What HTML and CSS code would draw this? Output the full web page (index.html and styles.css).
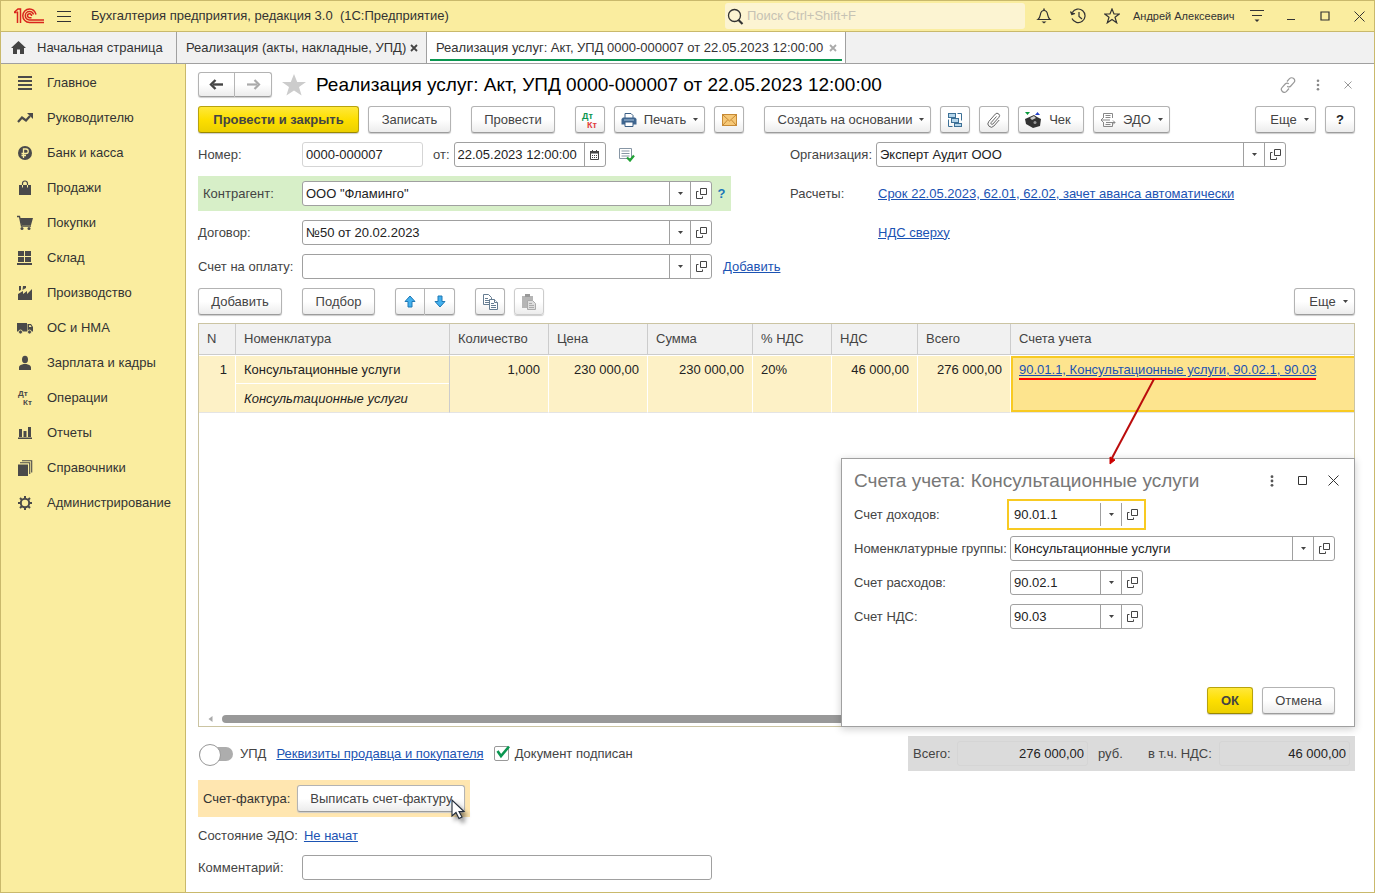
FILE: index.html
```html
<!DOCTYPE html>
<html lang="ru">
<head>
<meta charset="utf-8">
<title>Бухгалтерия предприятия</title>
<link rel="stylesheet" href="styles.css">
</head>
<body>
<svg class="sprite" aria-hidden="true">
  <symbol id="i-open" viewBox="0 0 11 11"><path d="M4.500.5h6v6h-6zM2.500 3.500H.5v7h6v-2" fill="none" stroke="#444"/></symbol>
  <symbol id="i-down" viewBox="0 0 5 3"><path d="M0 0h5L2.500 3z" fill="#444"/></symbol>
</svg>
<div class="app">
  <header class="titlebar">
    <svg class="logo" width="30" height="16" viewBox="0 0 30 16" fill="none" stroke="#d9251d" stroke-width="1.500"><path d="M0 4.500h2.500M3.500 15V3.500M0 4.500L4 1h2.500v14M22 6.500C21 3 18.500 1 15.500 1a6.700 6.700 0 0 0 0 13.400H30M19.500 6.500C19 4.700 17.300 3.500 15.500 3.500a4.200 4.200 0 0 0 0 8.400H30M17.500 8a2 2 0 1 0-2 1.700h2"/></svg>
    <button class="ico burger" aria-label="Меню"><svg width="14" height="11" viewBox="0 0 14 11"><path d="M0 .5h14M0 5.500h14M0 10.500h14" stroke="#333"/></svg></button>
    <h1 class="app-title">Бухгалтерия предприятия, редакция 3.0 &nbsp;(1С:Предприятие)</h1>
    <label class="search"><svg width="17" height="17" viewBox="0 0 17 17" fill="none" stroke="#333"><circle cx="7.500" cy="7.500" r="6" stroke-width="1.300"/><path d="M11.500 12l4 4" stroke-width="2.200"/></svg><input type="text" placeholder="Поиск Ctrl+Shift+F" aria-label="Поиск"></label>
    <div class="title-icons">
      <button class="ico" aria-label="Уведомления"><svg width="16" height="16" viewBox="0 0 16 16"><path d="M2 11.500c2-1.500 2-3 2.500-5.500C5 3.500 6 2.500 8 2.500s3 1 3.500 3.500c.5 2.500.5 4 2.500 5.500z" fill="none" stroke="#333" stroke-width="1.200"/><path d="M8 .500v2" stroke="#333" stroke-width="1.500"/><path d="M5.500 13.500h5L8 15.500z" fill="#333"/></svg></button>
      <button class="ico" aria-label="История"><svg width="17" height="16" viewBox="0 0 17 16" fill="none" stroke="#333" stroke-width="1.200"><path d="M2.300 4.500A6.800 6.800 0 1 1 2 10.500M9 4v4.500l3 2.500"/><path d="M.5 3.500l1.300 3L5 5.500" fill="#333"/></svg></button>
      <button class="ico" aria-label="Избранное"><svg width="16" height="16" viewBox="0 0 16 16"><path d="M8 1l2 5h5.300L11 9.300l1.700 5.500L8 11.500l-4.700 3.300L5 9.300.700 6H6z" fill="none" stroke="#333" stroke-width="1.200"/></svg></button>
    </div>
    <span class="user">Андрей Алексеевич</span>
    <div class="win-icons">
      <button class="ico" aria-label="Сервис"><svg width="14" height="14" viewBox="0 0 14 14"><path d="M0 1.500h14M2 6.500h10" stroke="#333" stroke-width="1.200"/><path d="M4.500 10.500h5L7 13z" fill="#333"/></svg></button>
      <button class="ico" aria-label="Свернуть"><svg width="10" height="12" viewBox="0 0 10 12"><path d="M1 9.500h8" stroke="#333"/></svg></button>
      <button class="ico" aria-label="Развернуть"><svg width="10" height="10" viewBox="0 0 10 10"><path d="M1 1h8v8H1z" fill="none" stroke="#333" stroke-width="1.200"/></svg></button>
      <button class="ico" aria-label="Закрыть"><svg width="11" height="11" viewBox="0 0 11 11"><path d="M.5.5l10 10M10.500.5l-10 10" stroke="#333"/></svg></button>
    </div>
  </header>

  <nav class="tabs">
    <a class="tab tab-home" href="#"><svg width="15" height="13" viewBox="0 0 15 13"><path d="M7.500 0L15 7h-2v6H9V8.500H6V13H2V7H0z" fill="#444"/></svg>Начальная страница</a>
    <a class="tab tab-list" href="#">Реализация (акты, накладные, УПД)<svg width="8" height="8" viewBox="0 0 8 8"><path d="M1 1l6 6M7 1L1 7" stroke="#444" stroke-width="1.800"/></svg></a>
    <a class="tab tab-doc" href="#">Реализация услуг: Акт, УПД 0000-000007 от 22.05.2023 12:00:00<svg width="8" height="8" viewBox="0 0 8 8"><path d="M1 1l6 6M7 1L1 7" stroke="#aaa" stroke-width="1.800"/></svg></a>
  </nav>

  <div class="body">
    <nav class="sidebar">
      <a href="#"><svg viewBox="0 0 16 16"><path d="M1 2h14M1 6h14M1 10h14M1 14h14" stroke="#4a4a4a" stroke-width="2"/></svg>Главное</a>
      <a href="#"><svg viewBox="0 0 16 16"><path d="M1 12l4-4.500 4 3 4-4.500" fill="none" stroke="#4a4a4a" stroke-width="2.200"/><path d="M10 3h6v6z" fill="#4a4a4a"/></svg>Руководителю</a>
      <a href="#"><svg viewBox="0 0 16 16"><circle cx="8" cy="8" r="7" fill="#4a4a4a"/><path d="M6.500 13V4H9a2.200 2.200 0 0 1 0 4.500H4.500M4.500 10.500H9" fill="none" stroke="#faed9f" stroke-width="1.300"/></svg>Банк и касса</a>
      <a href="#"><svg viewBox="0 0 16 16"><path d="M2 5h12v10H2z" fill="#4a4a4a"/><path d="M5.500 7V3.500a2.500 2.500 0 0 1 5 0V7" fill="none" stroke="#4a4a4a" stroke-width="1.200"/><path d="M5.500 5v2.500M10.500 5v2.500" stroke="#faed9f"/></svg>Продажи</a>
      <a href="#"><svg viewBox="0 0 16 16"><path d="M0 1.500h2.500L4.500 11H14" fill="none" stroke="#4a4a4a" stroke-width="1.300"/><path d="M3 3h13l-2 7H4.500z" fill="#4a4a4a"/><circle cx="5" cy="13.500" r="1.500" fill="#4a4a4a"/><circle cx="12" cy="13.500" r="1.500" fill="#4a4a4a"/></svg>Покупки</a>
      <a href="#"><svg viewBox="0 0 16 16"><path d="M1 1h6v5H1zM8 1h6v5H8zM1 7h6v5H1zM8 7h6v5H8zM0 13h15v2H0z" fill="#4a4a4a"/></svg>Склад</a>
      <a href="#"><svg viewBox="0 0 16 16"><path d="M1 15V9l5-3v3l4-3v3l5-5v11zM2 1h2v4L2 6zM6 1h3v2L5.500 5z" fill="#4a4a4a"/></svg>Производство</a>
      <a href="#"><svg viewBox="0 0 16 16"><path d="M0 3h10v8.500H0zM10.500 4H14l2 3v4.500h-5.500z" fill="#4a4a4a"/><path d="M12 5.200h1.600l1 1.800H12z" fill="#faed9f"/><g fill="#4a4a4a" stroke="#faed9f" stroke-width=".8"><circle cx="3.500" cy="12" r="2"/><circle cx="12.500" cy="12" r="2"/></g></svg>ОС и НМА</a>
      <a href="#"><svg viewBox="0 0 16 16"><ellipse cx="8" cy="4.500" rx="3" ry="3.800" fill="#4a4a4a"/><path d="M2 15v-2.500C2 10 5 9.500 6.500 9h3c1.500.5 4.500 1 4.500 3.500V15z" fill="#4a4a4a"/></svg>Зарплата и кадры</a>
      <a href="#"><svg viewBox="0 0 16 16" class="dtkt"><text x="1" y="6" fill="#4a4a4a">Дт</text><text x="6" y="15" fill="#4a4a4a">Кт</text></svg>Операции</a>
      <a href="#"><svg viewBox="0 0 16 16"><path d="M2 4h3v8H2zM6.500 6h3v6h-3zM11 2h3v10h-3zM1 12.500h14V14H1z" fill="#4a4a4a"/></svg>Отчеты</a>
      <a href="#"><svg viewBox="0 0 16 16"><path d="M1 4.500h10V16H1z" fill="#4a4a4a"/><path d="M3 2.700h9.700V14M5 .700h9.700V12.500" fill="none" stroke="#4a4a4a" stroke-width="1.100"/></svg>Справочники</a>
      <a href="#"><svg viewBox="0 0 16 16" fill="none" stroke="#4a4a4a"><circle cx="8" cy="8" r="4.200" stroke-width="2"/><path d="M8 1v2.500M8 12.500V15M1 8h2.500M12.500 8H15M3 3l2 2M11 11l2 2M3 13l2-2M11 5l2-2" stroke-width="2"/></svg>Администрирование</a>
    </nav>

    <main class="main">
      <div class="doc-head">
        <div class="pair">
          <button class="btn w37" aria-label="Назад"><svg width="15" height="11" viewBox="0 0 15 11"><path d="M14 5.500H4" stroke="#444" stroke-width="2.400"/><path d="M6.500 1L2 5.500 6.500 10" fill="none" stroke="#444" stroke-width="2.400"/></svg></button>
          <button class="btn w37" aria-label="Вперед"><svg width="15" height="11" viewBox="0 0 15 11"><path d="M1 5.500h10" stroke="#aaa" stroke-width="2.200"/><path d="M8.500 1L13 5.500 8.500 10" fill="none" stroke="#aaa" stroke-width="2.200"/></svg></button>
        </div>
        <button class="ico star" aria-label="В избранное"><svg width="24" height="22" viewBox="0 0 24 22"><path d="M12 0l3.200 8H24l-7 5 2.600 8.500L12 16.500l-7.600 5L7 13 0 8h8.800z" fill="#ccc"/></svg></button>
        <h2 class="doc-title">Реализация услуг: Акт, УПД 0000-000007 от 22.05.2023 12:00:00</h2>
        <div class="doc-icons">
          <button class="ico" aria-label="Ссылка"><svg width="16" height="16" viewBox="0 0 16 16" fill="none" stroke="#999" stroke-width="1.200"><path d="M7 4.500l2.500-2.800a2.900 2.900 0 0 1 4.300 4l-3 3.300a2.600 2.600 0 0 1-3.600.2M9 11.500l-2.500 2.800a2.900 2.900 0 0 1-4.300-4l3-3.300a2.600 2.600 0 0 1 3.600-.2"/></svg></button>
          <button class="ico" aria-label="Еще"><svg width="4" height="12" viewBox="0 0 4 12" fill="#888"><circle cx="2" cy="1.700" r="1.300"/><circle cx="2" cy="6" r="1.300"/><circle cx="2" cy="10.300" r="1.300"/></svg></button>
          <button class="ico" aria-label="Закрыть"><svg width="8" height="8" viewBox="0 0 8 8"><path d="M.5.5l7 7M7.500.5l-7 7" stroke="#999"/></svg></button>
        </div>
      </div>

      <div class="toolbar">
        <button class="btn primary w161">Провести и закрыть</button>
        <button class="btn w83">Записать</button>
        <button class="btn w84 sep">Провести</button>
        <button class="btn w30 sep" aria-label="Дт Кт"><svg width="18" height="18" viewBox="0 0 18 18" class="dtkt"><text x="1" y="8" fill="#0a9650">Дт</text><text x="6" y="17" fill="#e23b3b">Кт</text></svg></button>
        <button class="btn w91"><svg width="16" height="16" viewBox="0 0 16 16"><path d="M4 1.500h6l2 2V7H4z" fill="#fff" stroke="#3b5f85"/><path d="M2 5.500h12l1.500 1.500v5.500H.5V7z" fill="#3f6690"/><path d="M3 8h10" stroke="#a9c3dd"/><path d="M4 10h8v4.500H4z" fill="#fff" stroke="#3b5f85"/></svg><span>Печать</span><svg class="caret" width="5" height="3"><use href="#i-down"/></svg></button>
        <button class="btn w30" aria-label="Письмо"><svg width="15" height="12" viewBox="0 0 15 12"><rect x=".5" y=".5" width="14" height="11" fill="#f6c877" stroke="#c78a35"/><path d="M1 1l6.500 6L14 1M1 11l4.500-5M14 11L9.500 6" fill="none" stroke="#c78a35"/></svg></button>
        <button class="btn w167 sep"><span>Создать на основании</span><svg class="caret" width="5" height="3"><use href="#i-down"/></svg></button>
        <button class="btn w30" aria-label="Структура подчиненности"><svg width="16" height="16" viewBox="0 0 16 16" fill="none" stroke="#3d7096"><path d="M10.500 1.500h4v7M1.500 7.500v7h4M4.500 5.500v3M8.500 10.500v2"/><g fill="#b5d5ea"><rect x="1.500" y="1.500" width="7" height="4"/><rect x="4.500" y="6.500" width="7" height="4"/><rect x="7.500" y="11.500" width="7" height="3"/></g></svg></button>
        <button class="btn w30" aria-label="Файлы"><svg width="14" height="16" viewBox="0 0 14 16" fill="none" stroke="#666"><path d="M9.500 4.500l-5.300 6a1.100 1.100 0 0 0 1.700 1.500l6-6.700a2.400 2.400 0 0 0-3.600-3.200l-6.500 7.400a3.400 3.400 0 0 0 5.100 4.500l5.300-6"/></svg></button>
        <button class="btn w66"><svg width="18" height="16" viewBox="0 0 18 16"><path d="M1 7l9-4 3 2 4 2-1 7-7 2-7-4z" fill="#333"/><path d="M6 6l4-2 2 2-4 2z" fill="#ccc"/><circle cx="11" cy="10.500" r="1.500" fill="#999"/><path d="M1 0h5L3.500 3z" fill="#0a9a3c"/><path d="M11 3h5l-2.500-3z" fill="#2340c8"/></svg><span>Чек</span></button>
        <button class="btn w77"><svg width="16" height="16" viewBox="0 0 16 16" fill="none" stroke="#888"><path d="M3.500 6V1.500h9V6M3.500 10v4.500h9V10M5.500 3.500h5M5.500 5.500h5M1 8h9M6 10.500h9M5.500 12.500h5M3 6L1 8l2 2M13 8.500l2 2-2 2"/></svg><span>ЭДО</span><svg class="caret" width="5" height="3"><use href="#i-down"/></svg></button>
        <button class="btn w61 push"><span>Еще</span><svg class="caret" width="5" height="3"><use href="#i-down"/></svg></button>
        <button class="btn w30 help">?</button>
      </div>

      <div class="form">
        <div class="row">
          <label class="lbl" for="num">Номер:</label>
          <input class="solo readonly" id="num" value="0000-000007" readonly>
          <label class="from" for="date">от:</label>
          <div class="field date"><input id="date" value="22.05.2023 12:00:00"><button aria-label="Календарь"><svg width="9" height="10" viewBox="0 0 9 10"><path d="M.5 1.500h8v8h-8z" fill="none" stroke="#444"/><path d="M0 1h9v2.500H0zM2 0h1v1H2zM6 0h1v1H6z" fill="#444"/><path d="M2 5.500h5M2 7.500h5" stroke="#444" stroke-dasharray="1 1"/></svg></button></div>
          <svg class="posted" width="16" height="14" viewBox="0 0 16 14"><path d="M.5.500h12v10H.5z" fill="#fff" stroke="#8796a5"/><path d="M2.500 3h8M2.500 5.500h8M2.500 8h8" stroke="#8796a5"/><path d="M8 9.500l3 3 4-5" fill="none" stroke="#21a336" stroke-width="2.200"/></svg>
        </div>
        <div class="row">
          <label class="lbl-r" for="org">Организация:</label>
          <div class="field long"><input id="org" value="Эксперт Аудит ООО"><button aria-label="Список"><svg width="5" height="3"><use href="#i-down"/></svg></button><button aria-label="Открыть"><svg width="11" height="11"><use href="#i-open"/></svg></button></div>
        </div>
        <div class="row green">
          <label class="lbl" for="contr">Контрагент:</label>
          <div class="field long"><input id="contr" value='ООО "Фламинго"'><button aria-label="Список"><svg width="5" height="3"><use href="#i-down"/></svg></button><button aria-label="Открыть"><svg width="11" height="11"><use href="#i-open"/></svg></button></div>
          <button class="ico hint">?</button>
        </div>
        <div class="row"><span class="lbl-r calc">Расчеты:</span><a href="#">Срок 22.05.2023, 62.01, 62.02, зачет аванса автоматически</a></div>
        <div class="row">
          <label class="lbl" for="dog">Договор:</label>
          <div class="field long"><input id="dog" value="№50 от 20.02.2023"><button aria-label="Список"><svg width="5" height="3"><use href="#i-down"/></svg></button><button aria-label="Открыть"><svg width="11" height="11"><use href="#i-open"/></svg></button></div>
        </div>
        <div class="row"><span class="lbl-r calc"></span><a href="#">НДС сверху</a></div>
        <div class="row">
          <label class="lbl" for="inv">Счет на оплату:</label>
          <div class="field long"><input id="inv"><button aria-label="Список"><svg width="5" height="3"><use href="#i-down"/></svg></button><button aria-label="Открыть"><svg width="11" height="11"><use href="#i-open"/></svg></button></div>
          <a class="add" href="#">Добавить</a>
        </div>
      </div>

      <div class="toolbar">
        <button class="btn w84">Добавить</button>
        <button class="btn w73 sep">Подбор</button>
        <div class="pair sep">
          <button class="btn w30" aria-label="Вверх"><svg width="12" height="13" viewBox="0 0 12 13"><path d="M6 1l5 5.500H8V12H4V6.500H1z" fill="#43b0ee" stroke="#1f78b4"/></svg></button>
          <button class="btn w30" aria-label="Вниз"><svg width="12" height="13" viewBox="0 0 12 13"><path d="M6 12L1 6.500h3V1h4v5.500h3z" fill="#43b0ee" stroke="#1f78b4"/></svg></button>
        </div>
        <button class="btn w30 sep" aria-label="Копировать"><svg width="15" height="16" viewBox="0 0 15 16" fill="#fff" stroke="#667d92"><path d="M.5.5h5l3 3v7h-8z"/><path d="M2 4.500h3M2 6.500h4M2 8.500h4"/><path d="M6.500 5.500h5l3 3v7h-8z"/><path d="M8 9.500h3M8 11.500h5M8 13.500h5M11.500 5.500v3h3"/></svg></button>
        <button class="btn w30 disabled" aria-label="Вставить" disabled><svg width="15" height="16" viewBox="0 0 15 16"><path d="M0 2h11v12H0z" fill="#b5b5b5"/><path d="M3 0h5v3H3z" fill="#999"/><path d="M5.500 6.500h5l3 3v6h-8z" fill="#ddd" stroke="#aaa"/><path d="M7 9.500h3M7 11.500h5M7 13.500h5" stroke="#aaa"/></svg></button>
        <button class="btn w61 push"><span>Еще</span><svg class="caret" width="5" height="3"><use href="#i-down"/></svg></button>
      </div>

      <section class="grid">
        <table>
          <colgroup><col class="c-n"><col class="c-nom"><col class="c-qty"><col class="c-qty"><col class="c-sum"><col class="c-rate"><col class="c-vat"><col class="c-tot"><col></colgroup>
          <thead><tr><th>N</th><th>Номенклатура</th><th>Количество</th><th>Цена</th><th>Сумма</th><th>% НДС</th><th>НДС</th><th>Всего</th><th>Счета учета</th></tr></thead>
          <tbody><tr>
            <td class="num">1</td>
            <td class="nom"><div>Консультационные услуги</div><div class="sub">Консультационные услуги</div></td>
            <td class="num">1,000</td><td class="num">230 000,00</td><td class="num">230 000,00</td><td>20%</td><td class="num">46 000,00</td><td class="num">276 000,00</td>
            <td class="sel"><a class="acc" href="#">90.01.1, Консультационные услуги, 90.02.1, 90.03<svg class="arrow" width="52" height="88" viewBox="0 0 52 88"><path d="M48 0L6 79" stroke="#bb0c0c" stroke-width="2"/><path d="M4 85V78l5 3z" fill="#c00" stroke="#c00"/></svg></a></td>
          </tr></tbody>
        </table>
        <div class="hscroll"><svg width="5" height="6" viewBox="0 0 5 6"><path d="M4.500 0v6L.5 3z" fill="#aaa"/></svg><i></i></div>

        <div class="dialog" role="dialog" aria-labelledby="dlg">
          <div class="dlg-head">
            <h3 id="dlg">Счета учета: Консультационные услуги</h3>
            <div class="dlg-icons">
              <button class="ico" aria-label="Еще"><svg width="4" height="12" viewBox="0 0 4 12" fill="#555"><circle cx="2" cy="1.700" r="1.400"/><circle cx="2" cy="6" r="1.400"/><circle cx="2" cy="10.300" r="1.400"/></svg></button>
              <button class="ico" aria-label="Развернуть"><svg width="9" height="9" viewBox="0 0 9 9"><path d="M.5.5h8v8h-8z" fill="none" stroke="#333"/></svg></button>
              <button class="ico" aria-label="Закрыть"><svg width="11" height="11" viewBox="0 0 11 11"><path d="M.5.5l10 10M10.500.5l-10 10" stroke="#333"/></svg></button>
            </div>
          </div>
          <div class="dlg-form">
            <label for="a1">Счет доходов:</label>
            <div class="field short focus"><input id="a1" value="90.01.1"><button aria-label="Список"><svg width="5" height="3"><use href="#i-down"/></svg></button><button aria-label="Открыть"><svg width="11" height="11"><use href="#i-open"/></svg></button></div>
            <label for="a2">Номенклатурные группы:</label>
            <div class="field"><input id="a2" value="Консультационные услуги"><button aria-label="Список"><svg width="5" height="3"><use href="#i-down"/></svg></button><button aria-label="Открыть"><svg width="11" height="11"><use href="#i-open"/></svg></button></div>
            <label for="a3">Счет расходов:</label>
            <div class="field short"><input id="a3" value="90.02.1"><button aria-label="Список"><svg width="5" height="3"><use href="#i-down"/></svg></button><button aria-label="Открыть"><svg width="11" height="11"><use href="#i-open"/></svg></button></div>
            <label for="a4">Счет НДС:</label>
            <div class="field short"><input id="a4" value="90.03"><button aria-label="Список"><svg width="5" height="3"><use href="#i-down"/></svg></button><button aria-label="Открыть"><svg width="11" height="11"><use href="#i-open"/></svg></button></div>
          </div>
          <div class="dlg-foot"><button class="btn primary w46">ОК</button><button class="btn w73">Отмена</button></div>
        </div>
      </section>

      <div class="summary">
        <label class="switch"><input type="checkbox">УПД</label>
        <a class="req" href="#">Реквизиты продавца и покупателя</a>
        <label class="check"><input type="checkbox" checked><svg class="tick" width="16" height="15" viewBox="0 0 16 15"><path d="M2.500 6l3.500 5 8-9.500" fill="none" stroke="#0a9650" stroke-width="2.600"/></svg>Документ подписан</label>
        <div class="totals">
          <label class="total-all" for="t1">Всего:</label><input id="t1" value="276 000,00" readonly>
          <span class="rub">руб.</span>
          <label class="total-vat" for="t2">в т.ч. НДС:</label><input id="t2" value="46 000,00" readonly>
        </div>
      </div>

      <div class="invoice">
        <span>Счет-фактура:</span>
        <button class="btn w168">Выписать счет-фактуру</button>
        <svg class="cursor" width="20" height="26" viewBox="0 0 20 26"><path d="M1 1v16l4-3.500 3 6 3-1.500-3-5.500h5z" fill="#fff" stroke="#222c3a" stroke-width="1.100"/></svg>
      </div>
      <div class="edo"><span>Состояние ЭДО:</span><a href="#">Не начат</a></div>
      <div class="row comment"><label class="lbl" for="com">Комментарий:</label><input class="solo" id="com"></div>
    </main>
  </div>
</div>
</body>
</html>
```
FILE: styles.css
```css
* { box-sizing: border-box; }
body, input, button { font: 13px/16px "Liberation Sans", Arial, sans-serif; color: #444; }
body { margin: 0; }
h1, h2, h3 { margin: 0; font-weight: normal; }
a { color: #1b53b3; }
svg { display: block; flex: none; }
.sprite { position: absolute; width: 0; height: 0; }
.app { display: flex; flex-direction: column; min-height: 100vh; border: 1px solid #c9b96c; background: #fff; }
.ico { display: flex; align-items: center; justify-content: center; padding: 0; border: 0; background: none; }

.titlebar { display: flex; align-items: center; height: 31px; background: #faed9f; border-bottom: 1px solid #c9b96c; }
.logo { margin-left: 13px; }
.burger { width: 14px; margin-left: 13px; }
.app-title { margin-left: 20px; font-size: 13px; line-height: 16px; color: #333; white-space: nowrap; }
.search { display: flex; align-items: center; width: 300px; height: 26px; margin-left: auto; padding-left: 2px; border-radius: 3px; background: #fcf4d2; }
.search input { flex: 1; min-width: 0; padding: 0 3px; border: 0; background: none; outline: 0; }
.search input::placeholder { color: #c6c2b4; }
.title-icons { display: flex; margin-left: 2px; }
.title-icons .ico { width: 34px; }
.user { width: 107px; margin-left: 4px; font-size: 11px; color: #333; white-space: nowrap; }
.win-icons { display: flex; margin-right: -2px; }
.win-icons .ico { width: 34px; }

.tabs { display: flex; height: 32px; background: #f1f1f1; border-bottom: 1px solid #a0a0a0; }
.tab { display: flex; align-items: center; border-right: 1px solid #a0a0a0; color: #333; text-decoration: none; white-space: nowrap; }
.tab-home { width: 176px; gap: 11px; padding-left: 10px; }
.tab-list { width: 250px; justify-content: space-between; padding: 0 8px 0 9px; }
.tab-doc { position: relative; width: 419px; justify-content: space-between; padding: 0 8px 0 9px; background: #fff; }
.tab-doc::after { content: ""; position: absolute; left: 3px; right: 3px; bottom: 2px; height: 2px; background: #0a9650; }

.body { flex: 1; display: flex; }
.sidebar { flex: none; width: 185px; padding-top: 1px; background: #faed9f; border-right: 1px solid #c9b96c; }
.sidebar a { display: flex; align-items: center; gap: 14px; height: 35px; padding-left: 16px; color: #333; text-decoration: none; white-space: nowrap; }
.sidebar svg { width: 16px; height: 16px; }
.dtkt { overflow: visible; font: bold 8px "Liberation Sans", Arial, sans-serif; }
.btn .dtkt { font-size: 9px; }

.main { flex: 1; min-width: 0; display: flex; flex-direction: column; gap: 9px; padding: 8px 19px 12px 12px; }
.doc-head { display: flex; align-items: center; height: 25px; }
.doc-head .btn { height: 25px; }
.star { margin-left: 10px; width: 24px; }
.doc-title { margin-left: 10px; font-size: 19px; line-height: 24px; color: #000; white-space: nowrap; }
.doc-icons { display: flex; margin: 0 -8px 0 auto; }
.doc-icons .ico { width: 30px; }

.btn { display: flex; align-items: center; justify-content: center; flex: none; height: 27px; padding: 0; border: 1px solid #b3b3b3; border-bottom-color: #9c9c9c; border-radius: 3px; background: linear-gradient(#fff 50%, #ececec); box-shadow: 0 1px 1px #ccc; white-space: nowrap; }
.btn span { margin: 0 7px; }
.primary { font-weight: bold; border-color: #b8a30c; border-bottom-color: #9a8800; background: linear-gradient(#ffe83a, #fddf00 50%, #ecd000); }
.disabled { border-color: #ccc; }
.help { font-weight: bold; color: #222; }
.pair { display: flex; }
.pair .btn:first-child { border-radius: 3px 0 0 3px; }
.pair .btn:last-child { border-left: 0; border-radius: 0 3px 3px 0; }
.w30 { width: 30px; }
.w37 { width: 37px; }
.w46 { width: 46px; }
.w61 { width: 61px; }
.w66 { width: 66px; }
.w73 { width: 73px; }
.w77 { width: 77px; }
.w83 { width: 83px; }
.w84 { width: 84px; }
.w91 { width: 91px; }
.w161 { width: 161px; }
.w167 { width: 167px; }
.w168 { width: 168px; }
.w61 span { margin-left: 8px; }
.toolbar { display: flex; gap: 9px; }
.toolbar .sep { margin-left: 11px; }
.toolbar .push { margin-left: auto; }

.form { display: grid; grid-template-columns: 592px 1fr; row-gap: 9px; }
.row { display: flex; align-items: center; min-height: 25px; white-space: nowrap; }
.lbl { flex: none; width: 104px; }
.lbl-r { width: 86px; }
.calc { width: 88px; }
.green { width: 533px; padding: 5px 0 5px 5px; background: #d7efc8; }
.green .lbl { width: 99px; }
.hint { width: 19px; color: #1b76b8; font-weight: bold; }
.add { margin-left: 11px; }
.solo { height: 25px; padding: 0 3px; border: 1px solid #a0a0a0; border-radius: 3px; outline: 0; color: #222; background: #fff; }
.readonly { width: 121px; border-color: #d5d5d5; }
.from { margin: 0 4px 0 10px; }
.field { display: flex; height: 25px; border: 1px solid #a0a0a0; border-radius: 3px; background: #fff; }
.field input { flex: 1; min-width: 0; padding: 0 3px; border: 0; background: none; outline: 0; color: #222; }
.field button { display: flex; align-items: center; justify-content: center; width: 21px; padding: 0; border: 0; border-left: 1px solid #a0a0a0; background: none; }
.long { flex: none; width: 410px; }
.date { width: 152px; }
.posted { margin-left: 13px; }
.short { width: 133px; }
.focus { border-color: #fff; outline: 2px solid #f8ca22; outline-offset: 1px; border-radius: 0; }

.grid { position: relative; flex: 1; display: flex; flex-direction: column; margin-top: -1px; border: 1px solid #cbc4a2; }
table { width: 100%; table-layout: fixed; border-collapse: separate; border-spacing: 0; }
.c-n { width: 37px; }
.c-nom { width: 214px; }
.c-qty { width: 99px; }
.c-sum { width: 105px; }
.c-rate { width: 79px; }
.c-vat { width: 86px; }
.c-tot { width: 93px; }
th, td { padding: 0 8px; text-align: left; white-space: nowrap; border-right: 1px solid #fff; }
th { height: 31px; font-weight: normal; background: #f1f1f1; border-right-color: #ccc; border-bottom: 1px solid #ccc; }
th:last-child { border-right: 0; }
td { height: 58px; padding-top: 6px; vertical-align: top; color: #222; background: #fdf1c6; border-top: 1px solid #fff; border-bottom: 1px solid #e4e4e4; }
.num { text-align: right; }
.nom { padding: 0; border-right-color: #ccc; }
.nom div { height: 28px; padding: 6px 8px 0; border-bottom: 1px solid #fff; }
.nom .sub { padding-top: 7px; border: 0; font-style: italic; }
.sel { border-right: 0; background: #fde48e; box-shadow: inset 2px 2px #f8ca22, inset 0 -2px #f8ca22; }
.acc { position: relative; display: inline-block; }
.acc::after { content: ""; position: absolute; left: 0; right: 0; bottom: -2px; height: 2px; background: #f00; }
.arrow { position: absolute; left: 87px; top: 17px; z-index: 3; }
.hscroll { display: flex; align-items: center; gap: 9px; margin: auto 0 3px; padding-left: 9px; }
.hscroll i { flex: 1; height: 8px; border-radius: 4px; background: #999; }

.dialog { position: absolute; right: -1px; bottom: -1px; z-index: 2; width: 514px; padding: 0 19px 12px 12px; border: 1px solid #a0a0a0; background: #fff; box-shadow: 0 2px 8px rgba(0, 0, 0, .2); }
.dlg-head { display: flex; align-items: center; justify-content: space-between; height: 43px; }
.dlg-head h3 { font-size: 19px; line-height: 24px; color: #777; white-space: nowrap; }
.dlg-icons { display: flex; margin-right: -14px; }
.dlg-icons .ico { width: 31px; }
.dlg-form { display: grid; grid-template-columns: 156px 1fr; row-gap: 9px; align-items: center; white-space: nowrap; }
.dlg-foot { display: flex; justify-content: flex-end; gap: 9px; margin-top: 58px; }

.summary { display: flex; align-items: center; height: 35px; white-space: nowrap; }
.switch { display: flex; align-items: center; gap: 7px; padding-left: 1px; }
.switch input { position: relative; appearance: none; width: 34px; height: 14px; margin: 0; border-radius: 7px; background: #adadad; }
.switch input::before { content: ""; position: absolute; left: 0; top: -3px; width: 20px; height: 20px; border: 1px solid #999; border-radius: 50%; background: #fff; }
.req { margin-left: 10px; }
.check { position: relative; display: flex; align-items: center; gap: 6px; margin-left: 10px; }
.check input { appearance: none; width: 15px; height: 15px; margin: 0; border: 1px solid #999; border-radius: 2px; }
.tick { position: absolute; left: 1px; top: -1px; }
.totals { display: flex; align-items: center; height: 35px; margin-left: auto; padding: 0 5px; background: #dbdbdb; }
.totals input { width: 131px; height: 25px; padding: 0 3px; border: 1px solid #d5d5d5; border-radius: 3px; background: none; text-align: right; color: #222; }
.total-all { width: 44px; }
.total-vat { width: 71px; }
.rub { width: 50px; margin-left: 10px; }

.invoice { position: relative; align-self: flex-start; display: flex; align-items: center; gap: 7px; padding: 5px; background: #ffe6b0; color: #333; }
.cursor { position: absolute; right: -1px; bottom: -8px; filter: drop-shadow(3px 4px 2px rgba(0, 0, 0, .45)); }
.edo { display: flex; align-items: center; gap: 6px; height: 20px; }
.comment .solo { width: 410px; }
```
